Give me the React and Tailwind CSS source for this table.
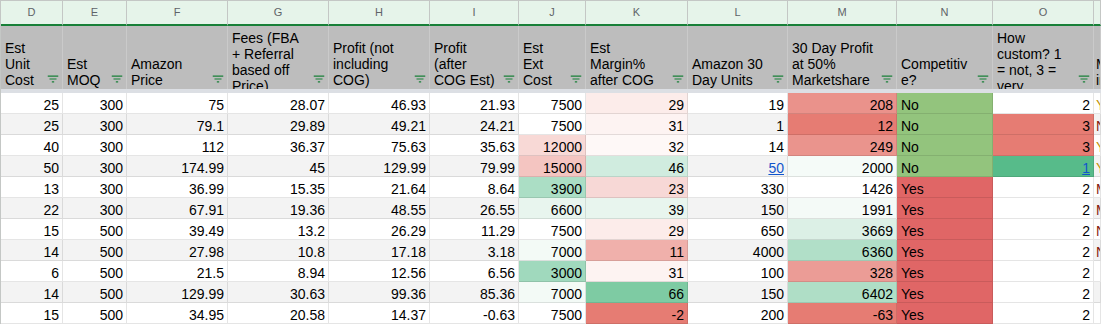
import React from "react";

const GRID =
  "grid grid-cols-[62px_64px_101px_101px_101px_89px_67px_102px_100px_109px_96px_101px_minmax(0,1fr)]";

const letters = ["D", "E", "F", "G", "H", "I", "J", "K", "L", "M", "N", "O", ""];

const headers = [
  { lines: ["Est", "Unit", "Cost"] },
  { lines: ["Est", "MOQ"] },
  { lines: ["Amazon", "Price"] },
  { lines: ["Fees (FBA", "+ Referral", "based off", "Price)"], top: true },
  { lines: ["Profit (not", "including", "COG)"] },
  { lines: ["Profit", "(after", "COG Est)"] },
  { lines: ["Est", "Ext", "Cost"] },
  { lines: ["Est", "Margin%", "after COG"] },
  { lines: ["Amazon 30", "Day Units"] },
  { lines: ["30 Day Profit", "at 50%", "Marketshare"] },
  { lines: ["Competitiv", "e?"] },
  { lines: ["How", "custom? 1", "= not, 3 =", "very"], top: true },
  { lines: ["Made", "in USA?"], noIcon: true, tight: true },
];

const rows = [
  {
    v: ["25", "300", "75", "28.07", "46.93", "21.93", "7500", "29", "19", "208", "No", "2", "Yes"],
    bg: { 6: "bg-white", 7: "bg-[#fcecea]", 9: "bg-[#ea928b]", 10: "bg-[#93c47d]", 11: "bg-white" },
  },
  {
    v: ["25", "300", "79.1", "29.89", "49.21", "24.21", "7500", "31", "1", "12", "No", "3", "No"],
    bg: { 6: "bg-white", 7: "bg-[#fdf3f2]", 9: "bg-[#e67c73]", 10: "bg-[#93c47d]", 11: "bg-[#e67c73]" },
  },
  {
    v: ["40", "300", "112", "36.37", "75.63", "35.63", "12000", "32", "14", "249", "No", "3", "Yes"],
    bg: { 6: "bg-[#f8d9d6]", 7: "bg-[#fef8f7]", 9: "bg-[#ea948d]", 10: "bg-[#93c47d]", 11: "bg-[#e67c73]" },
  },
  {
    v: ["50", "300", "174.99", "45", "129.99", "79.99", "15000", "46", "50", "2000", "No", "1", "Yes"],
    bg: { 6: "bg-[#f4c5c1]", 7: "bg-[#d0ecdf]", 9: "bg-[#f5fbf8]", 10: "bg-[#93c47d]", 11: "bg-[#57bb8a]" },
    link: { 8: true, 11: true },
  },
  {
    v: ["13", "300", "36.99", "15.35", "21.64", "8.64", "3900", "23", "330", "1426", "Yes", "2", "Maybe"],
    bg: { 6: "bg-[#abdec5]", 7: "bg-[#f7d8d6]", 9: "bg-white", 10: "bg-[#e06666]", 11: "bg-white" },
  },
  {
    v: ["22", "300", "67.91", "19.36", "48.55", "26.55", "6600", "39", "150", "1991", "Yes", "2", "Maybe"],
    bg: { 6: "bg-[#e8f5ee]", 7: "bg-[#e8f5ee]", 9: "bg-[#f4faf7]", 10: "bg-[#e06666]", 11: "bg-white" },
  },
  {
    v: ["15", "500", "39.49", "13.2", "26.29", "11.29", "7500", "29", "650", "3669", "Yes", "2", "No"],
    bg: { 6: "bg-white", 7: "bg-[#fcecea]", 9: "bg-[#dcf0e6]", 10: "bg-[#e06666]", 11: "bg-white" },
  },
  {
    v: ["14", "500", "27.98", "10.8", "17.18", "3.18", "7000", "11", "4000", "6360", "Yes", "2", "No"],
    bg: { 6: "bg-[#f3faf6]", 7: "bg-[#f0b0ab]", 9: "bg-[#b1dfc8]", 10: "bg-[#e06666]", 11: "bg-white" },
  },
  {
    v: ["6", "500", "21.5", "8.94", "12.56", "6.56", "3000", "31", "100", "328", "Yes", "2", ""],
    bg: { 6: "bg-[#a0d9bd]", 7: "bg-[#fdf3f2]", 9: "bg-[#eb9c96]", 10: "bg-[#e06666]", 11: "bg-white" },
  },
  {
    v: ["14", "500", "129.99", "30.63", "99.36", "85.36", "7000", "66", "150", "6402", "Yes", "2", ""],
    bg: { 6: "bg-[#f3faf6]", 7: "bg-[#7ecba3]", 9: "bg-[#afdec6]", 10: "bg-[#e06666]", 11: "bg-white" },
  },
  {
    v: ["15", "500", "34.95", "20.58", "14.37", "-0.63", "7500", "-2", "200", "-63", "Yes", "2", ""],
    bg: { 6: "bg-white", 7: "bg-[#e67c73]", 9: "bg-[#e67c73]", 10: "bg-[#e06666]", 11: "bg-white" },
  },
];

function FilterIcon() {
  return (
    <svg width="14" height="14" viewBox="0 0 24 24" className="shrink-0 self-end mb-[3px] mr-[2px]">
      <path d="M10 18h4v-2h-4v2zM3 6v2h18V6H3zm3 7h12v-2H6v2z" fill="#188038" />
    </svg>
  );
}

function HeaderCell({ h }) {
  return (
    <div className="h-[63px] bg-[#bdbdbd] border-r border-[#cacaca] flex overflow-hidden">
      <div
        className={
          "flex-1 min-w-0 flex flex-col text-[14px] leading-[16px] text-black whitespace-nowrap " +
          (h.tight ? "pl-[2px] " : "pl-[4px] ") +
          (h.top ? "justify-start pt-[4px]" : "justify-end pb-[1px]")
        }
      >
        {h.lines.map((l, i) => (
          <div key={i}>{l}</div>
        ))}
      </div>
      {!h.noIcon && <FilterIcon />}
    </div>
  );
}

function DataCell({ value, ci, row, ri }) {
  const alt = ri % 2 === 1;
  const bg = row.bg[ci] || (alt ? "bg-[#f3f3f3]" : "bg-white");
  const isLink = row.link && row.link[ci];
  let align = "justify-end pr-[3px] ";
  if (ci === 10) align = "justify-start pl-[4px] ";
  if (ci === 12) align = "justify-start pl-[2px] ";
  let color = "text-black";
  if (ci === 12) color = value === "Yes" ? "text-[#bf9000]" : "text-[#85200c]";
  return (
    <div
      className={
        "h-[21px] border-r border-b border-black/10 flex items-end overflow-hidden whitespace-nowrap text-[14px] leading-[16px] " +
        align +
        bg +
        " " +
        color
      }
    >
      {isLink ? <span className="text-[#1155cc] underline">{value}</span> : value}
    </div>
  );
}

export default function App() {
  return (
    <div
      className="w-[1101px] h-[325px] overflow-hidden bg-white"
      style={{ fontFamily: '"Liberation Sans", Arial, sans-serif' }}
    >
      <div className={GRID + " border-l border-[#c4c7c5]"}>
        {letters.map((l, i) => (
          <div
            key={"l" + i}
            className="h-[26px] bg-[#e6f4ea] border-t border-r border-[#c4c7c5] border-b-2 border-b-[#188038] flex items-center justify-center text-[11px] text-[#5f6368]"
          >
            {l}
          </div>
        ))}
        {headers.map((h, i) => (
          <HeaderCell key={"h" + i} h={h} />
        ))}
        <div className="col-span-full h-[4px] bg-[#dcdfe4]" />
        {rows.map((row, ri) =>
          row.v.map((value, ci) => (
            <DataCell key={ri + "-" + ci} value={value} ci={ci} row={row} ri={ri} />
          ))
        )}
      </div>
    </div>
  );
}
